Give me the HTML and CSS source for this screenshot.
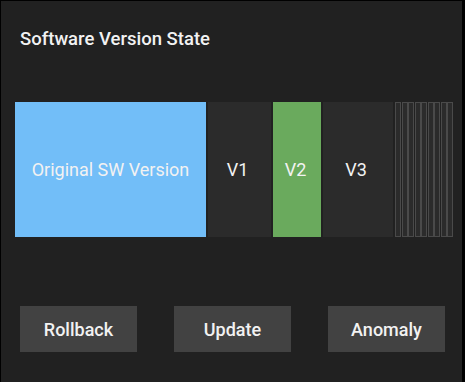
FILE: index.html
```html
<!DOCTYPE html>
<html lang="en">

<head>
    <meta charset="utf-8" />
    <meta name="viewport" content="width=device-width, initial-scale=1.0" />
    <title>Software Version State</title>
    <link rel="stylesheet" href="styles.css">
</head>

<body>
    <div class="card">
        <h1 class="card-title">Software Version State</h1>

        <div class="version-bar">
            <div class="segment segment-original">Original SW Version</div>
            <div class="segment segment-v1">V1</div>
            <div class="segment segment-v2">V2</div>
            <div class="segment segment-v3">V3</div>
            <div class="slots">
                <div class="slot"></div>
                <div class="slot"></div>
                <div class="slot"></div>
                <div class="slot"></div>
                <div class="slot"></div>
                <div class="slot"></div>
                <div class="slot"></div>
                <div class="slot"></div>
                <div class="slot"></div>
            </div>
        </div>

        <div class="actions">
            <button class="action">Rollback</button>
            <button class="action">Update</button>
            <button class="action">Anomaly</button>
        </div>
    </div>
</body>

</html>
```

FILE: styles.css
```css
html {
    font-family: Roboto, "Liberation Sans", sans-serif;
    color: #f2f2f2;
}

body {
    margin: 0;
    background: #000;
}

.card {
    margin: 1px 3px 0 1px;
    height: 381px;
    background: #212121;
    box-sizing: border-box;
    padding-top: 28px;
}

.card-title {
    margin: 0 0 0 19px;
    font-size: 18.5px;
    font-weight: 500;
    line-height: 20px;
}

.version-bar {
    display: flex;
    gap: 2px;
    height: 135px;
    margin: 53px 0 0 14px;
}

.segment {
    display: flex;
    align-items: center;
    justify-content: center;
    font-size: 18px;
    background: #2b2b2b;
    box-sizing: border-box;
}

.segment-original {
    width: 191px;
    background: #72bef8;
}

.segment-v1,
.segment-v3 {
    padding-right: 4px;
}

.segment-v1 {
    width: 63px;
}

.segment-v2 {
    width: 48px;
    padding-right: 3px;
    background: #6aaa5d;
}

.segment-v3 {
    width: 70px;
}

.slots {
    display: flex;
    gap: 0.5px;
}

.slot {
    width: 6px;
    box-sizing: border-box;
    border: 1px solid #4a4a4a;
    background: #2b2b2b;
}

.actions {
    display: flex;
    gap: 37px;
    margin: 69px 0 0 19px;
}

.action {
    width: 117px;
    height: 46px;
    border: none;
    background: #424242;
    color: #f2f2f2;
    font-family: inherit;
    font-size: 18px;
    font-weight: 500;
}
```
